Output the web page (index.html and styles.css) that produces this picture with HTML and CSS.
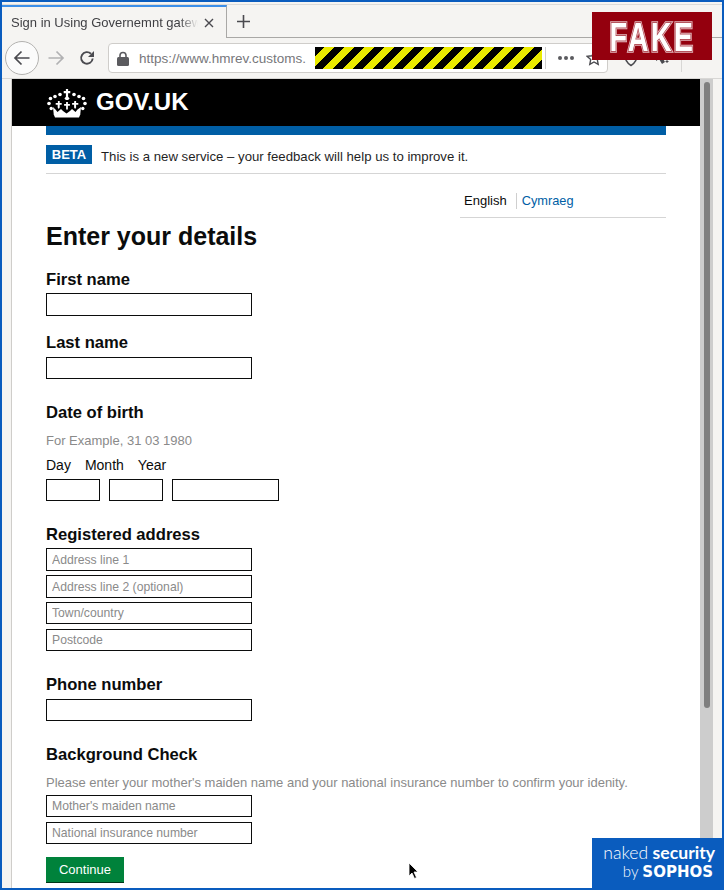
FILE: index.html
```html
<!DOCTYPE html>
<html lang="en">
<head>
<meta charset="utf-8">
<title>Sign in Using Governemnt gateway</title>
<link rel="stylesheet" href="styles.css">
</head>
<body>
<div class="window">
  <div class="tabstrip">
    <div class="tab">
      <span class="tab-title">Sign in Using Governemnt gateway</span>
      <svg class="tab-close" width="10" height="10" viewBox="0 0 10 10"><path d="M1 1l8 8M9 1l-8 8" stroke="#4a4a4f" stroke-width="1.4" fill="none"/></svg>
    </div>
    <svg class="tab-new" width="15" height="15" viewBox="0 0 15 15"><path d="M7.500 1v13M1 7.500h13" stroke="#4a4a4f" stroke-width="1.600" fill="none"/></svg>
  </div>
  <div class="toolbar">
    <div class="back">
      <svg width="18" height="16" viewBox="0 0 18 16"><path d="M16.500 8H2.500M8.500 1.500L2 8l6.500 6.500" stroke="#4a4a4f" stroke-width="1.700" fill="none"/></svg>
    </div>
    <svg class="forward" width="18" height="16" viewBox="0 0 18 16"><path d="M1.500 8h14M9.500 1.500L16 8l-6.500 6.500" stroke="#b1b1b3" stroke-width="1.700" fill="none"/></svg>
    <svg class="reload" width="16" height="16" viewBox="0 0 16 16"><path d="M13.700 8.500A5.800 5.800 0 1 1 12 3.800" stroke="#4a4a4f" stroke-width="1.900" fill="none"/><path d="M15 1v6H9z" fill="#4a4a4f"/></svg>
    <div class="urlbar">
      <svg class="lock" width="12" height="15" viewBox="0 0 12 15"><path d="M3 6.500V4.500a3 3 0 0 1 6 0v2" stroke="#5b5b5f" stroke-width="1.600" fill="none"/><rect x="0" y="6" width="12" height="9" rx="1.500" fill="#5b5b5f"/></svg>
      <span class="url">https://www.hmrev.customs.</span>
      <div class="stripes"></div>
      <div class="url-sep"></div>
      <span class="dots"><i></i><i></i><i></i></span>
      <svg class="star" width="16" height="16" viewBox="0 0 16 16"><path d="M8 1.500l2 4.300 4.700.6-3.400 3.200.9 4.700L8 12l-4.200 2.300.9-4.700L1.300 6.400 6 5.800z" stroke="#4a4a4f" stroke-width="1.400" fill="none"/></svg>
    </div>
    <svg class="shield" width="16" height="18" viewBox="0 0 16 18"><path d="M1.500 3.500L8 1.500l6.500 2c0 6-1.500 10-6.500 13-5-3-6.500-7-6.500-13z" stroke="#4a4a4f" stroke-width="1.500" fill="none"/></svg>
    <svg class="puzzle" width="16" height="18" viewBox="0 0 16 18"><path d="M2 2l9 4-3 2 3 5-3 2-3-5-3 2z" fill="#4a4a4f"/><path d="M13 11v3M11.500 12.500h3" stroke="#4a4a4f"/></svg>
    <div class="tool-sep"></div>
    <div class="menu-bar"></div>
  </div>
  <div class="viewport">
    <main class="page">
      <header class="govbar">
        <svg class="crown" width="40" height="30" viewBox="0 0 40 30" fill="#fff">
          <path d="M18.900 1h2.200v2h2.200v2.200h-2.200v3.500l1.500 1.800-1.500 1.500h-2.200l-1.500-1.500 1.500-1.800V5.200h-2.200V3h2.200z"/>
          <circle cx="13" cy="6.500" r="1.800"/><circle cx="27" cy="6.500" r="1.800"/>
          <circle cx="8" cy="8.500" r="1.800"/><circle cx="32" cy="8.500" r="1.800"/>
          <circle cx="3.500" cy="10.500" r="1.800"/><circle cx="36.500" cy="10.500" r="1.800"/>
          <circle cx="2" cy="15.500" r="1.800"/><circle cx="38" cy="15.500" r="1.800"/>
          <circle cx="4.200" cy="20.500" r="1.700"/><circle cx="35.800" cy="20.500" r="1.700"/>
          <path d="M10.900 13h1.800v2h2v1.800h-2v2.700l-1 1.500-1-1.500v-2.700h-2V15h2.200zM19.100 14h1.800v2h2v1.800h-2v3l-.9 1.500-.9-1.500v-3h-2V16h2zM27.300 13h1.800v2h2.200v1.800h-2.200v2.700l-1 1.500-1-1.500v-2.700h-2V15h2z"/>
          <path d="M6 19l2.500 2.500 2 2.500 3.500-3 2 2 3.500 2.500 3.500-2.500 2-2 3.500 3 2-2.500L34 19l-.7 7H6.700z"/>
          <path d="M6.500 26h27L32 29.500H8z"/>
        </svg>
        <span class="govuk">GOV.UK</span>
      </header>
      <div class="container">
        <div class="bluebar"></div>
        <div class="beta">
          <strong class="beta-tag">BETA</strong>
          <span class="beta-text">This is a new service – your feedback will help us to improve it.</span>
        </div>
        <div class="lang">
          <span class="lang-en">English</span>
          <a class="lang-cy" href="#">Cymraeg</a>
        </div>
        <form class="form">
          <h1 class="title">Enter your details</h1>
          <h2 class="label label-first">First name</h2>
          <input class="field" type="text">
          <h2 class="label label-last">Last name</h2>
          <input class="field field-sm" type="text">
          <h2 class="label label-dob">Date of birth</h2>
          <p class="hint hint-dob">For Example, 31 03 1980</p>
          <div class="dmy"><span>Day</span><span>Month</span><span>Year</span></div>
          <div class="dob-row">
            <input class="field dob-sm" type="text">
            <input class="field dob-sm" type="text">
            <input class="field dob-lg" type="text">
          </div>
          <h2 class="label label-addr">Registered address</h2>
          <div class="stack">
            <input class="field" type="text" placeholder="Address line 1">
            <input class="field" type="text" placeholder="Address line 2 (optional)">
            <input class="field field-sm" type="text" placeholder="Town/country">
            <input class="field field-sm" type="text" placeholder="Postcode">
          </div>
          <h2 class="label label-phone">Phone number</h2>
          <input class="field field-sm" type="text">
          <h2 class="label label-bg">Background Check</h2>
          <p class="hint hint-bg">Please enter your mother's maiden name and your national insurance number to confirm your idenity.</p>
          <div class="stack">
            <input class="field field-sm" type="text" placeholder="Mother's maiden name">
            <input class="field field-sm" type="text" placeholder="National insurance number">
          </div>
          <button class="continue" type="button">Continue</button>
        </form>
      </div>
    </main>
    <div class="scrollbar"><div class="thumb"></div></div>
  </div>
</div>
<div class="fake"><span class="fake-text" data-text="FAKE">FAKE</span></div>
<div class="sophos">
  <div class="ns-line"><span class="ns-light">naked</span> <b>security</b></div>
  <div class="ns-line ns-by"><span class="ns-light">by</span> <b class="ns-sophos">SOPHOS</b></div>
</div>
<svg class="cursor" width="12" height="18" viewBox="0 0 12 18"><path d="M1 1v13l3-3 2.500 5.500 2-1L6 10h4z" fill="#000" stroke="#fff" stroke-width=".8"/></svg>
</body>
</html>
```

FILE: styles.css
```css
* { box-sizing: border-box; }
html, body { margin: 0; padding: 0; height: 890px; overflow: hidden; }
body { font-family: "Liberation Sans", Arial, sans-serif; position: relative; width: 724px; }

.window {
  width: 724px; height: 890px; border: 2px solid #0a5cbe;
  background: #f5f4f2; display: flex; flex-direction: column; overflow: hidden;
}

.tabstrip { height: 36px; flex: none; display: flex; align-items: flex-start; padding-top: 3px; position: relative; }
.tabstrip::before { content: ""; position: absolute; left: 0; right: 0; top: 2px; height: 1px; background: #dcdbd9; }
.tabstrip::after { content: ""; position: absolute; left: 225px; right: 0; bottom: 0; height: 1px; background: #a9a8a6; }
.tab {
  width: 225px; height: 33px; border-top: 2px solid #3d8fe8; border-right: 1px solid #a9a8a6;
  display: flex; align-items: center; padding-left: 9px; position: relative;
}
.tab-title {
  width: 187px; flex: none; overflow: hidden; white-space: nowrap; font-size: 13px; color: #3f3f43;
  -webkit-mask-image: linear-gradient(90deg, #000 168px, transparent 187px);
  mask-image: linear-gradient(90deg, #000 168px, transparent 187px);
}
.tab-close { margin-left: 6px; flex: none; }
.tab-new { margin: 9px 0 0 9px; flex: none; }

.toolbar { height: 41px; flex: none; display: flex; align-items: center; position: relative; border-bottom: 1px solid #d8d7d5; }
.back {
  width: 34px; height: 34px; border-radius: 50%; border: 1px solid #b3b2b0; background: #fbfbfb;
  display: flex; align-items: center; justify-content: center; margin-left: 3px; flex: none;
}
.forward { margin-left: 8px; flex: none; }
.reload { margin-left: 14px; flex: none; }
.urlbar {
  margin-left: 13px; width: 500px; height: 30px; flex: none; background: #fff; border: 1px solid #cfcdca; border-radius: 4px;
  display: flex; align-items: center; padding-left: 8px; position: relative;
}
.lock { flex: none; }
.url { font-size: 13.500px; color: #77777b; margin-left: 10px; width: 176px; white-space: nowrap; overflow: hidden; }
.stripes {
  width: 227px; height: 22px; flex: none;
  background: repeating-linear-gradient(135deg, #000 0 7.070px, #eaea00 7.070px 14.140px);
}
.url-sep { width: 1px; height: 22px; background: #d0cfcd; margin-left: 3px; flex: none; }
.dots { display: flex; gap: 2px; margin-left: 12px; }
.dots i { width: 4px; height: 4px; border-radius: 50%; background: #5b5b5f; display: block; }
.star { margin-left: 12px; flex: none; }
.shield { margin-left: 15px; flex: none; }
.puzzle { margin-left: 15px; flex: none; }
.tool-sep { width: 1px; height: 28px; background: #d8d7d5; margin-left: 11px; flex: none; }
.menu-bar { width: 13px; height: 2px; background: #4a4a4f; margin: 0 0 0 15px; flex: none; }

.viewport { flex: 1; display: flex; padding-left: 9px; min-height: 0; }
.page { width: 689px; background: #fff; border-left: 1px solid #cfcdca; overflow: hidden; flex: none; }
.scrollbar { width: 13px; background: #cdcdcd; flex: none; padding: 3px 3px 0 4px; }
.thumb { width: 6px; height: 626px; border-radius: 3px; background: #7f7f7f; }

.govbar { height: 47px; background: #000; display: flex; align-items: center; padding-left: 35px; }
.crown { flex: none; }
.govuk { color: #fff; font-weight: 700; font-size: 24px; line-height: 28px; margin: -2px 0 0 9px; }

.container { margin: 0 34px; width: 620px; }
.bluebar { height: 9px; background: #005ea5; }
.beta { height: 39px; border-bottom: 1px solid #d5d5d5; display: flex; align-items: flex-start; padding-top: 10px; }
.beta-tag { width: 46px; height: 19px; background: #005ea5; color: #fff; font-size: 13px; line-height: 19px; text-align: center; }
.beta-text { font-size: 13.200px; color: #1f1f1f; margin-left: 9px; line-height: 19px; margin-top: 2px; }

.lang { margin: 0 0 0 414px; width: 206px; height: 44px; border-bottom: 1px solid #d5d5d5; display: flex; align-items: center; padding: 10px 0 0 4px; font-size: 13px; }
.lang-en { color: #0b0c0c; padding-right: 9px; line-height: 16px; border-right: 1px solid #cfcfcf; }
.lang-cy { color: #005ea5; text-decoration: none; margin-left: 5px; line-height: 16px; font-size: 12.800px; }

.form { display: block; }
.title { margin: 0; font-size: 25px; line-height: 30px; color: #0b0c0c; font-weight: 700; padding-top: 3px; }
.label { margin: 0; font-size: 16.600px; line-height: 20px; font-weight: 700; color: #0b0c0c; }
.label-first { margin-top: 19px; margin-bottom: 3px; }
.label-last { margin-top: 17px; margin-bottom: 4px; }
.label-dob { margin-top: 24px; }
.label-addr { margin-top: 24px; margin-bottom: 3px; }
.label-phone { margin-top: 23px; margin-bottom: 4px; }
.label-bg { margin-top: 24px; }

.field {
  display: block; width: 206px; height: 23px; border: 1px solid #0b0c0c; border-radius: 0; background: #fff;
  padding: 0 5px; font-family: inherit; font-size: 12.200px; margin: 0; outline: none;
}
.field::placeholder { color: #8a8a8a; opacity: 1; }
.field-sm { height: 22px; margin-bottom: 1px; }
.hint { margin: 0; font-size: 13px; line-height: 16px; color: #8a8a8a; }
.hint-dob { margin-top: 10px; }
.hint-bg { margin-top: 10px; }
.dmy { display: flex; font-size: 14px; line-height: 16px; color: #0b0c0c; margin-top: 8px; gap: 14px; }
.dob-row { display: flex; gap: 9px; margin-top: 6px; }
.dob-sm { width: 54px; height: 22px; }
.dob-lg { width: 107px; height: 22px; }
.stack { display: flex; flex-direction: column; gap: 4px; }
.hint-bg + .stack { margin-top: 4px; }
.continue {
  display: block; margin-top: 12px; width: 78px; height: 26px; background: #00823b; color: #fff; border: 0; border-bottom: 1px solid #003618;
  font-family: inherit; font-size: 13px; padding: 0;
}

.fake {
  position: absolute; left: 592px; top: 12px; width: 120px; height: 48px; background: #94000e;
  display: flex; align-items: center; justify-content: center;
}
.fake-text {
  position: relative; font-family: "Liberation Sans", sans-serif; font-weight: 700; font-size: 40px; letter-spacing: 3px; line-height: 1;
  color: #fff; -webkit-text-stroke: 3.500px #e3b7bb; transform: scaleX(.72); margin-top: 1px;
}
.fake-text::after {
  content: attr(data-text); position: absolute; left: 0; top: 0; color: #fff; -webkit-text-stroke: 1.500px #a83540; paint-order: stroke fill;
}
.sophos {
  position: absolute; left: 592px; top: 838px; width: 132px; height: 52px; background: #0a5cbe; color: #fff;
  padding: 5px 9px 0 0; text-align: right;
}
.ns-line { font-family: Lato, "Liberation Sans", sans-serif; font-size: 17.600px; line-height: 19px; white-space: nowrap; }
.ns-light { font-weight: 300; }
.ns-by { font-size: 15px; line-height: 18px; padding-right: 2px; }
.ns-sophos { font-family: "DejaVu Sans", sans-serif; font-size: 15px; font-weight: 700; letter-spacing: 0; }
.cursor { position: absolute; left: 408px; top: 862px; }
```
